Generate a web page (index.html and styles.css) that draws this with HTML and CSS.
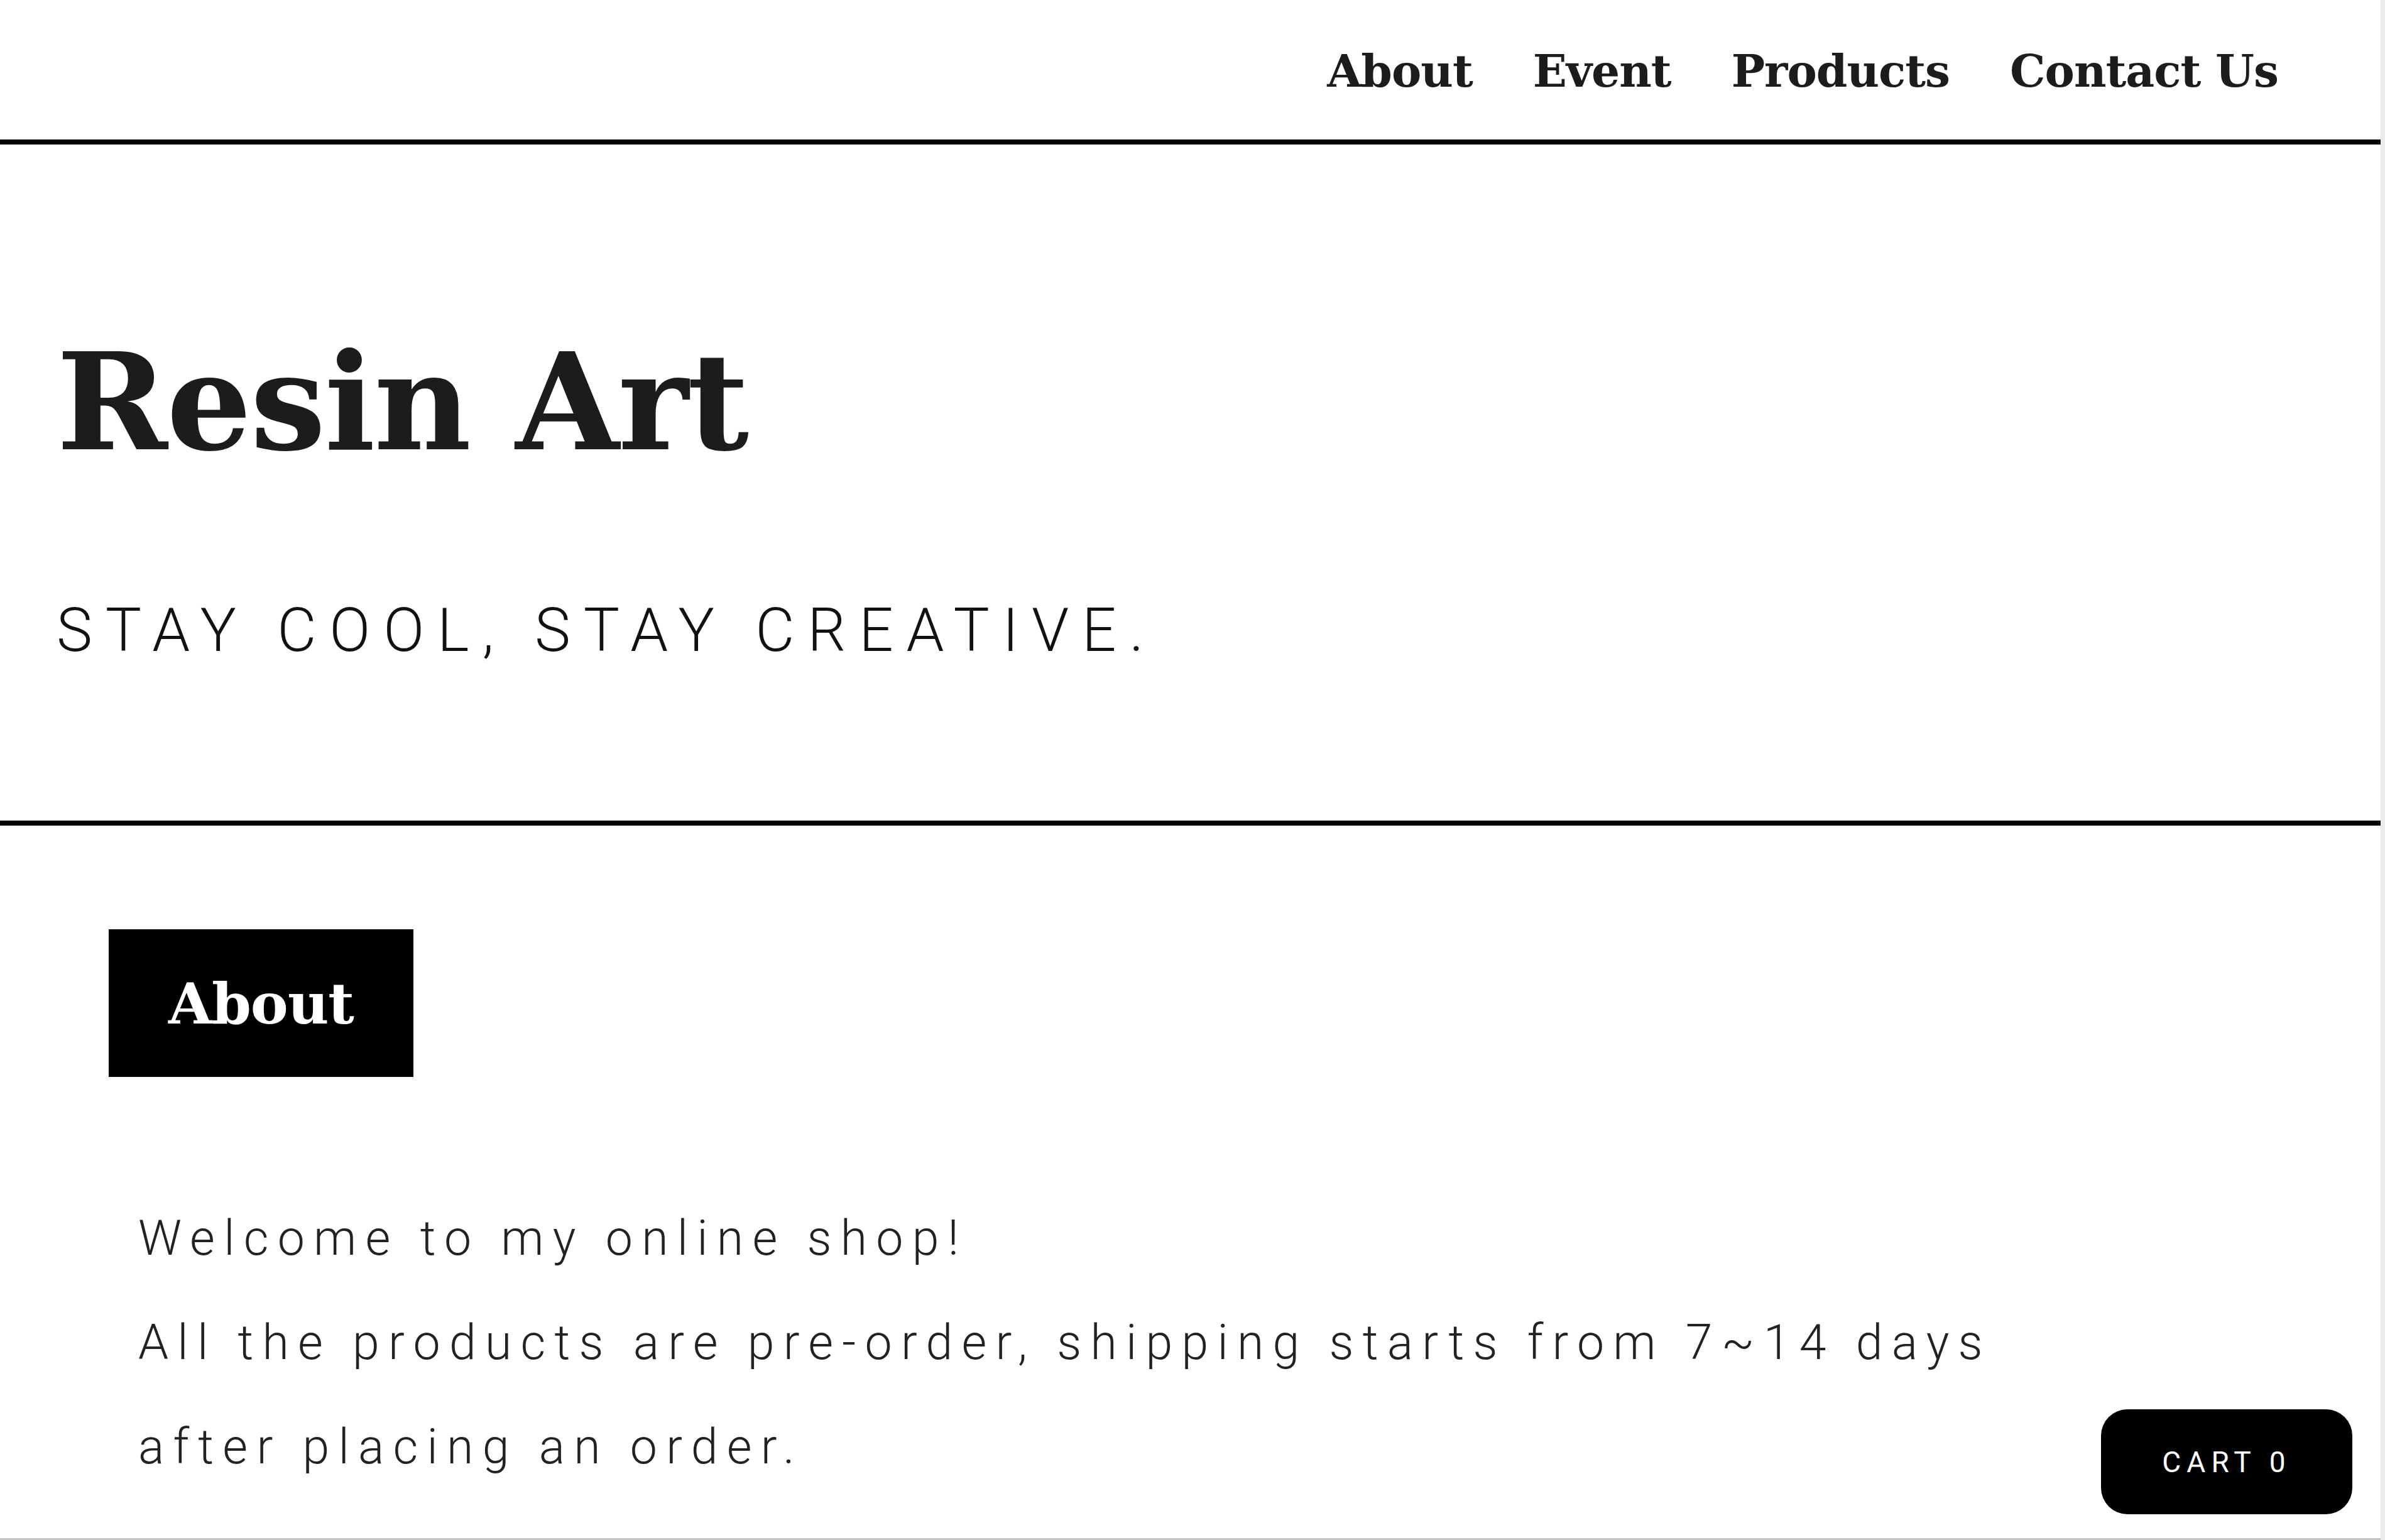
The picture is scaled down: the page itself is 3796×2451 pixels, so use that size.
FILE: index.html
```html
<!DOCTYPE html>
<html lang="en">
<head>
<meta charset="utf-8">
<title>Resin Art</title>
<link rel="stylesheet" href="styles.css">
</head>
<body>
<div class="page">
  <header class="site-header">
    <nav class="main-nav">
      <a class="nav-link" href="#about">About</a>
      <a class="nav-link" href="#event">Event</a>
      <a class="nav-link" href="#products">Products</a>
      <a class="nav-link" href="#contact">Contact Us</a>
    </nav>
  </header>
  <section class="hero">
    <h1 class="hero-title">Resin Art</h1>
    <p class="hero-tagline">STAY COOL, STAY CREATIVE.</p>
  </section>
  <section class="about" id="about">
    <h2 class="about-badge">About</h2>
    <div class="about-text">
      <p class="about-line">Welcome to my online shop!</p>
      <p class="about-line">All the products are pre-order, shipping starts from 7~14 days after placing an order.</p>
    </div>
  </section>
</div>
<a class="cart-button" href="#cart">CART 0</a>
</body>
</html>
```

FILE: styles.css
```css
html {
  background: #ebebeb;
  overflow: hidden;
}
body {
  margin: 0;
  width: 3789px;
  height: 2448px;
  background: #ffffff;
  border-bottom: 3px solid #c4c4c4;
  overflow: hidden;
  color: #1c1c1c;
}
.page {
  display: flex;
  flex-direction: column;
}
.site-header {
  height: 222px;
  border-bottom: 8px solid #000;
  display: flex;
  justify-content: flex-end;
  align-items: flex-start;
  padding-right: 163px;
}
.main-nav {
  display: flex;
  gap: 96px;
  padding-top: 78px;
}
.nav-link {
  font-family: "DejaVu Serif", serif;
  font-weight: 700;
  font-size: 71px;
  line-height: 1;
  color: #1c1c1c;
  text-decoration: none;
  letter-spacing: -1px;
}
.hero {
  border-bottom: 8px solid #000;
  padding: 304px 0 255px 90px;
  display: flex;
  flex-direction: column;
  gap: 208px;
}
.hero-title {
  margin: 0;
  font-family: "DejaVu Serif", serif;
  font-weight: 700;
  font-size: 213px;
  line-height: 1;
  color: #1c1c1c;
  letter-spacing: -2px;
}
.hero-tagline {
  margin: 0;
  font-family: Roboto, "Open Sans", sans-serif;
  font-weight: 300;
  font-size: 96px;
  line-height: 1;
  letter-spacing: 0.217em;
  color: #111;
}
.about {
  padding: 165px 0 0 173px;
  display: flex;
  flex-direction: column;
  align-items: flex-start;
}
.about-badge {
  margin: 0;
  width: 485px;
  height: 235px;
  background: #000;
  color: #fff;
  display: flex;
  align-items: center;
  justify-content: center;
  font-family: "DejaVu Serif", serif;
  font-weight: 700;
  font-size: 90px;
  line-height: 1;
  letter-spacing: -1px;
}
.about-text {
  margin-top: 174px;
  margin-left: 47px;
  width: 3150px;
}
.about-line {
  margin: 0;
  font-family: Roboto, "Open Sans", sans-serif;
  font-weight: 300;
  font-size: 77px;
  line-height: 166px;
  letter-spacing: 0.185em;
  color: #222;
}
.cart-button {
  position: fixed;
  right: 52px;
  bottom: 41px;
  width: 400px;
  height: 167px;
  border-radius: 42px;
  background: #000;
  color: #fff;
  display: flex;
  align-items: center;
  justify-content: center;
  font-family: Roboto, "Open Sans", sans-serif;
  font-size: 46px;
  letter-spacing: 0.2em;
  text-decoration: none;
}
```
